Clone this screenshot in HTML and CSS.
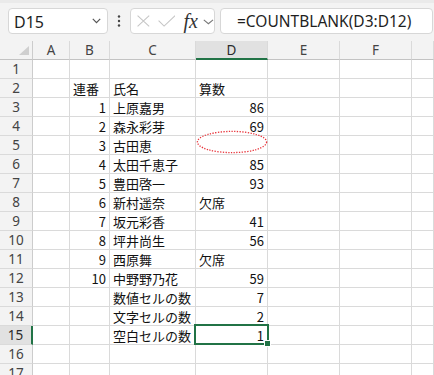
FILE: index.html
```html
<!DOCTYPE html>
<html lang="ja">
<head>
<meta charset="utf-8">
<title>COUNTBLANK</title>
<link rel="stylesheet" href="styles.css">
</head>
<body>
<div class="toolbar">
  <div class="namebox">
    <span class="name">D15</span>
    <svg class="chev" width="9" height="6" viewBox="0 0 9 6"><path d="M0.8 0.8 L4.5 4.6 L8.2 0.8" fill="none" stroke="#555" stroke-width="1.2"/></svg>
  </div>
  <div class="dots">
    <svg width="4" height="12" viewBox="0 0 4 12"><circle cx="2" cy="1.5" r="1.2" fill="#444"/><circle cx="2" cy="6" r="1.2" fill="#444"/><circle cx="2" cy="10.5" r="1.2" fill="#444"/></svg>
  </div>
  <div class="fxgroup">
    <svg class="ico-x" width="13" height="12" viewBox="0 0 13 12"><path d="M0.6 0.5 L12.4 11.5 M12.4 0.5 L0.6 11.5" fill="none" stroke="#c6c6c6" stroke-width="1.1"/></svg>
    <svg class="ico-ok" width="18" height="12" viewBox="0 0 18 12"><path d="M0.6 5.5 L6.2 11.2 L17.4 0.6" fill="none" stroke="#c6c6c6" stroke-width="1.1"/></svg>
    <span class="fx">fx</span>
    <svg class="chev2" width="11" height="6" viewBox="0 0 11 6"><path d="M0.8 0.8 L5.5 4.8 L10.2 0.8" fill="none" stroke="#777" stroke-width="1.1"/></svg>
  </div>
  <div class="formula">=COUNTBLANK(D3:D12)</div>
</div>

<div class="sheet">
  <div class="hd corner"><svg width="10" height="9" viewBox="0 0 10 9"><polygon points="10,0 10,9 0,9" fill="#cfcfcf"/></svg></div>
  <div class="hd">A</div><div class="hd">B</div><div class="hd">C</div><div class="hd sel">D</div><div class="hd">E</div><div class="hd">F</div><div class="hd"></div>

  <div class="rh">1</div><div class="c"></div><div class="c"></div><div class="c"></div><div class="c"></div><div class="c"></div><div class="c"></div><div class="c"></div>
  <div class="rh">2</div><div class="c"></div><div class="c">連番</div><div class="c">氏名</div><div class="c">算数</div><div class="c"></div><div class="c"></div><div class="c"></div>
  <div class="rh">3</div><div class="c"></div><div class="c n">1</div><div class="c">上原嘉男</div><div class="c n">86</div><div class="c"></div><div class="c"></div><div class="c"></div>
  <div class="rh">4</div><div class="c"></div><div class="c n">2</div><div class="c">森永彩芽</div><div class="c n">69</div><div class="c"></div><div class="c"></div><div class="c"></div>
  <div class="rh">5</div><div class="c"></div><div class="c n">3</div><div class="c">古田恵</div><div class="c n"></div><div class="c"></div><div class="c"></div><div class="c"></div>
  <div class="rh">6</div><div class="c"></div><div class="c n">4</div><div class="c">太田千恵子</div><div class="c n">85</div><div class="c"></div><div class="c"></div><div class="c"></div>
  <div class="rh">7</div><div class="c"></div><div class="c n">5</div><div class="c">豊田啓一</div><div class="c n">93</div><div class="c"></div><div class="c"></div><div class="c"></div>
  <div class="rh">8</div><div class="c"></div><div class="c n">6</div><div class="c">新村遥奈</div><div class="c">欠席</div><div class="c"></div><div class="c"></div><div class="c"></div>
  <div class="rh">9</div><div class="c"></div><div class="c n">7</div><div class="c">坂元彩香</div><div class="c n">41</div><div class="c"></div><div class="c"></div><div class="c"></div>
  <div class="rh">10</div><div class="c"></div><div class="c n">8</div><div class="c">坪井尚生</div><div class="c n">56</div><div class="c"></div><div class="c"></div><div class="c"></div>
  <div class="rh">11</div><div class="c"></div><div class="c n">9</div><div class="c">西原舞</div><div class="c">欠席</div><div class="c"></div><div class="c"></div><div class="c"></div>
  <div class="rh">12</div><div class="c"></div><div class="c n">10</div><div class="c">中野野乃花</div><div class="c n">59</div><div class="c"></div><div class="c"></div><div class="c"></div>
  <div class="rh">13</div><div class="c"></div><div class="c"></div><div class="c">数値セルの数</div><div class="c n">7</div><div class="c"></div><div class="c"></div><div class="c"></div>
  <div class="rh">14</div><div class="c"></div><div class="c"></div><div class="c">文字セルの数</div><div class="c n">2</div><div class="c"></div><div class="c"></div><div class="c"></div>
  <div class="rh sel">15</div><div class="c"></div><div class="c"></div><div class="c">空白セルの数</div><div class="c n">1</div><div class="c"></div><div class="c"></div><div class="c"></div>
  <div class="rh">16</div><div class="c"></div><div class="c"></div><div class="c"></div><div class="c"></div><div class="c"></div><div class="c"></div><div class="c"></div>
  <div class="rh">17</div><div class="c"></div><div class="c"></div><div class="c"></div><div class="c"></div><div class="c"></div><div class="c"></div><div class="c"></div>

  <svg class="ellipse" width="72" height="24" viewBox="0 0 72 24"><ellipse cx="36" cy="12" rx="34.6" ry="10.6" fill="none" stroke="#e8333a" stroke-width="1.3" stroke-dasharray="1.3 1.4"/></svg>
  <div class="selbox"></div>
  <div class="handle"></div>
</div>
</body>
</html>
```
FILE: styles.css
```css
html, body {
  margin: 0;
  padding: 0;
}
body {
  width: 434px;
  height: 375px;
  overflow: hidden;
  background: #ffffff;
  font-family: "Noto Sans CJK JP", "Noto Sans", sans-serif;
}

.toolbar {
  box-sizing: border-box;
  height: 41px;
  padding: 8px 1px 0 8px;
  background: #f3f3f3;
  border-top: 3px solid #eaeaea;
  display: flex;
  align-items: flex-start;
}
.toolbar > * {
  margin-top: -3px;
}

.namebox {
  box-sizing: border-box;
  width: 100px;
  height: 26px;
  background: #fff;
  border: 1px solid #d7d7d7;
  border-radius: 4px;
  display: flex;
  align-items: center;
  justify-content: space-between;
  padding: 0 6px 0 5px;
}
.name {
  font-family: "Noto Sans", sans-serif;
  font-size: 16px;
  color: #1f1f1f;
  line-height: 1;
  padding-top: 1px;
}

.dots {
  width: 22px;
  height: 26px;
  display: flex;
  align-items: center;
  justify-content: center;
}

.fxgroup {
  box-sizing: border-box;
  width: 85px;
  height: 26px;
  background: #fff;
  border: 1px solid #d7d7d7;
  border-radius: 4px;
  display: flex;
  align-items: center;
  padding: 0 0 0 6px;
}
.ico-x { margin-right: 8px; }
.ico-ok { margin-right: 8px; }
.fx {
  font-family: "Liberation Serif", "DejaVu Serif", serif;
  font-style: italic;
  font-size: 20px;
  color: #333;
  line-height: 1;
  width: 18px;
  margin-right: 2px;
}
.chev2 { margin-top: 1px; }

.formula {
  box-sizing: border-box;
  flex: 1;
  margin-left: 5px;
  height: 26px;
  background: #fff;
  border: 1px solid #d7d7d7;
  border-radius: 4px;
  padding-left: 16px;
  display: flex;
  align-items: center;
  font-family: "Noto Sans", sans-serif;
  font-size: 15.5px;
  color: #1f1f1f;
  white-space: nowrap;
  overflow: hidden;
}

.sheet {
  position: relative;
  display: grid;
  grid-template-columns: 33px 37px 40px 86px 72px 72px 72px 1fr;
  grid-auto-rows: 19px;
}
.sheet > div {
  box-sizing: border-box;
  white-space: nowrap;
  overflow: hidden;
}

.hd {
  background: #f3f3f3;
  border-right: 1px solid #dadada;
  border-bottom: 1px solid #c3c3c3;
  font-family: "Noto Sans", sans-serif;
  font-size: 13.5px;
  color: #444;
  text-align: center;
  line-height: 19px;
}
.hd.corner {
  display: flex;
  justify-content: flex-end;
  align-items: flex-end;
  padding: 0 3px 4px 0;
  border-right: 1px solid #cccccc;
}
.hd.sel {
  background: #e1e1e1;
  border-bottom: 2px solid #217346;
  color: #2b2b2b;
}

.rh {
  background: #f3f3f3;
  border-right: 1px solid #cccccc;
  border-bottom: 1px solid #dadada;
  font-family: "Noto Sans", sans-serif;
  font-size: 13.5px;
  color: #444;
  text-align: center;
  line-height: 19px;
}
.rh.sel {
  background: #e1e1e1;
  border-right: 2px solid #217346;
  color: #2b2b2b;
}

.c {
  background: #fff;
  border-right: 1px solid #dadada;
  border-bottom: 1px solid #dadada;
  padding: 0 3px;
  font-size: 13px;
  line-height: 19px;
  color: #111;
}
.c.n {
  text-align: right;
  padding-right: 3px;
}

.ellipse {
  position: absolute;
  left: 196px;
  top: 89px;
}
.selbox {
  position: absolute;
  left: 194px;
  top: 283px;
  width: 75px;
  height: 21px;
  box-sizing: border-box;
  border: 2px solid #217346;
}
.handle {
  position: absolute;
  left: 265px;
  top: 300px;
  width: 5px;
  height: 5px;
  background: #217346;
  outline: 1px solid #ffffff;
}
```
